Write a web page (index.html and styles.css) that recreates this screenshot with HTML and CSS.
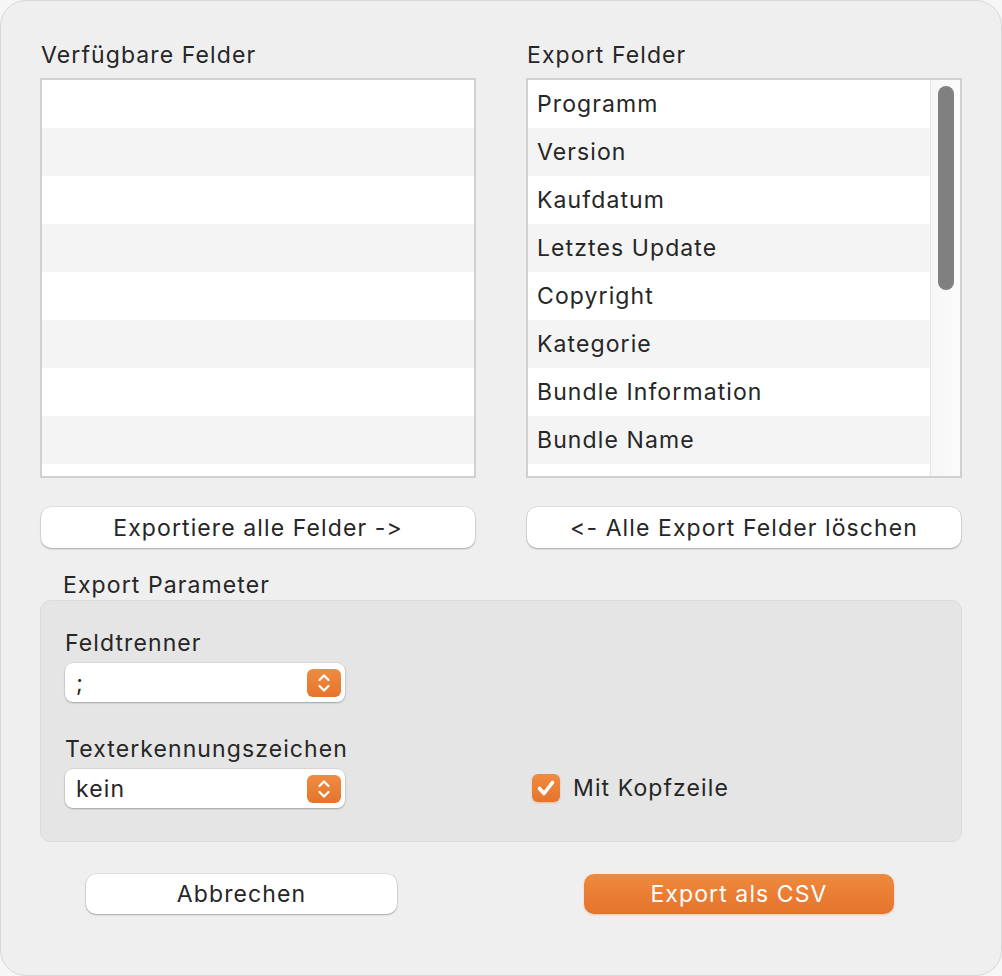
FILE: index.html
```html
<!DOCTYPE html>
<html lang="de">
<head>
    <meta charset="UTF-8">
    <title>CSV Export</title>
    <link rel="stylesheet" href="styles.css">
</head>
<body>
<div class="window">
    <div class="columns">
        <div class="col">
            <div class="label">Verfügbare Felder</div>
            <ul class="list">
                <li></li><li></li><li></li><li></li><li></li><li></li><li></li><li></li><li></li>
            </ul>
            <button class="btn wide">Exportiere alle Felder -&gt;</button>
        </div>
        <div class="col">
            <div class="label">Export Felder</div>
            <div class="list scrolled">
                <ul class="items">
                    <li>Programm</li>
                    <li>Version</li>
                    <li>Kaufdatum</li>
                    <li>Letztes Update</li>
                    <li>Copyright</li>
                    <li>Kategorie</li>
                    <li>Bundle Information</li>
                    <li>Bundle Name</li>
                    <li></li>
                </ul>
                <div class="track"><div class="thumb"></div></div>
            </div>
            <button class="btn wide">&lt;- Alle Export Felder löschen</button>
        </div>
    </div>

    <div class="label group-title">Export Parameter</div>
    <div class="group">
        <div class="group-left">
            <div class="label">Feldtrenner</div>
            <div class="select">
                <span>;</span>
                <span class="stepper">
                    <svg width="34" height="28" viewBox="0 0 34 28">
                        <polyline points="12.5,11 17,6.5 21.5,11" />
                        <polyline points="12.5,17 17,21.5 21.5,17" />
                    </svg>
                </span>
            </div>
            <div class="label second">Texterkennungszeichen</div>
            <div class="select">
                <span>kein</span>
                <span class="stepper">
                    <svg width="34" height="28" viewBox="0 0 34 28">
                        <polyline points="12.5,11 17,6.5 21.5,11" />
                        <polyline points="12.5,17 17,21.5 21.5,17" />
                    </svg>
                </span>
            </div>
        </div>
        <div class="check-row">
            <span class="checkbox">
                <svg width="28" height="28" viewBox="0 0 28 28">
                    <polyline points="7.5,14.5 12,19.5 20.5,8.5" />
                </svg>
            </span>
            <span class="check-label">Mit Kopfzeile</span>
        </div>
    </div>

    <div class="footer">
        <button class="btn cancel">Abbrechen</button>
        <button class="btn primary">Export als CSV</button>
    </div>
</div>
</body>
</html>
```

FILE: styles.css
```css
* {
    margin: 0;
    padding: 0;
    box-sizing: border-box;
}

body {
    background: #f6f6f6;
    font-family: Inter, "Liberation Sans", sans-serif;
    font-size: 23px;
    letter-spacing: 1.1px;
    font-feature-settings: "calt" 0;
    color: #262626;
}

.window {
    width: 1002px;
    height: 976px;
    background: #efefef;
    border: 1px solid #d8d8d8;
    border-radius: 26px;
    padding: 39px 39px 0 39px;
}

.columns {
    display: flex;
    gap: 50px;
}

.col {
    width: 436px;
}

.label {
    height: 30px;
    line-height: 30px;
    padding-left: 1px;
}

.list {
    list-style: none;
    margin-top: 8px;
    height: 400px;
    border: 2px solid #d0d0d0;
    background: #fff;
    overflow: hidden;
}

.list > li,
.items > li {
    height: 48px;
    line-height: 48px;
    padding-left: 9px;
}

.list > li:nth-child(even),
.items > li:nth-child(even) {
    background: #f4f4f4;
}

.scrolled {
    display: flex;
}

.items {
    list-style: none;
    flex: 1;
}

.track {
    width: 30px;
    border-left: 1px solid #e4e4e4;
    background: linear-gradient(to right, #f6f6f6, #fbfbfb);
    padding: 6px 6px 0 7px;
}

.thumb {
    height: 204px;
    border-radius: 8px;
    background: #808080;
}

.btn {
    display: block;
    font-family: inherit;
    font-size: inherit;
    letter-spacing: inherit;
    font-feature-settings: inherit;
    color: #262626;
    background: #fff;
    border: none;
    border-radius: 10px;
    box-shadow: 0 0 0 0.5px rgba(0, 0, 0, 0.12), 0 1px 2px rgba(0, 0, 0, 0.25);
    height: 41px;
}

.wide {
    width: 434px;
    margin: 29px 0 0 1px;
}

.group-title {
    margin-top: 22px;
    padding-left: 23px;
}

.group {
    height: 242px;
    background: #e5e5e5;
    border: 1px solid #dcdcdc;
    border-radius: 10px;
    padding: 27px 0 0 24px;
    display: flex;
}

.group-left {
    width: 280px;
}

.group-left .label {
    padding-left: 0;
}

.second {
    margin-top: 32px;
}

.select {
    margin-top: 5px;
    height: 39px;
    background: #fff;
    border-radius: 8px;
    box-shadow: 0 0 0 0.5px rgba(0, 0, 0, 0.1), 0 1px 2px rgba(0, 0, 0, 0.25);
    display: flex;
    align-items: center;
    justify-content: space-between;
    padding: 0 4px 0 11px;
}

.stepper {
    width: 34px;
    height: 28px;
    border-radius: 6px;
    background: linear-gradient(#ef8c41, #e5742c);
    display: flex;
}

.stepper polyline,
.checkbox polyline {
    fill: none;
    stroke: #fff;
    stroke-width: 2.2;
    stroke-linecap: round;
    stroke-linejoin: round;
}

.check-row {
    align-self: flex-end;
    margin: 0 0 34px 187px;
    height: 39px;
    display: flex;
    align-items: center;
}

.checkbox {
    width: 28px;
    height: 28px;
    border-radius: 6px;
    background: linear-gradient(#ef8c41, #e5742c);
    box-shadow: 0 1px 2px rgba(229, 116, 44, 0.4);
    display: flex;
}

.checkbox polyline {
    stroke-width: 3.6;
}

.check-label {
    margin-left: 13px;
}

.footer {
    display: flex;
    margin-top: 32px;
}

.cancel {
    width: 311px;
    height: 40px;
    margin-left: 46px;
}

.primary {
    width: 310px;
    height: 40px;
    margin-left: 187px;
    color: #fff;
    background: linear-gradient(#ee8a3d, #e5732b);
    box-shadow: 0 1px 2px rgba(229, 116, 44, 0.35);
}
```
